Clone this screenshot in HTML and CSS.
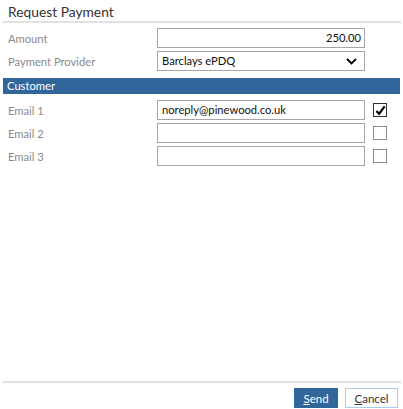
FILE: index.html
```html
<!DOCTYPE html>
<html lang="en">
<head>
  <meta charset="UTF-8" />
  <title>Request Payment</title>
  <link rel="stylesheet" href="styles.css">
</head>
<body>
  <div class="dialog">
    <div class="dialog-title">Request Payment</div>

    <div class="dialog-body">
      <div class="form-row">
        <label class="field-label">Amount</label>
        <div class="field-box amount">250.00</div>
      </div>
      <div class="form-row">
        <label class="field-label">Payment Provider</label>
        <div class="field-box select-box">
          <span>Barclays ePDQ</span>
          <svg class="chevron" width="11" height="7" viewBox="0 0 11 7">
            <path d="M1 1 L5.5 5.5 L10 1" fill="none" stroke="#000" stroke-width="1.8"/>
          </svg>
        </div>
      </div>

      <div class="section-bar">Customer</div>

      <div class="form-row">
        <label class="field-label">Email 1</label>
        <div class="field-box">noreply@pinewood.co.uk</div>
        <span class="check checked">
          <svg width="11" height="11" viewBox="0 0 12 12">
            <path d="M1.5 6.5 L4.5 9.5 L10.5 1.5" fill="none" stroke="#000" stroke-width="2.4"/>
          </svg>
        </span>
      </div>
      <div class="form-row">
        <label class="field-label">Email 2</label>
        <div class="field-box"></div>
        <span class="check"></span>
      </div>
      <div class="form-row">
        <label class="field-label">Email 3</label>
        <div class="field-box"></div>
        <span class="check"></span>
      </div>
    </div>

    <div class="dialog-footer">
      <button class="btn btn-primary"><u>S</u>end</button>
      <button class="btn btn-default"><u>C</u>ancel</button>
    </div>
  </div>
</body>
</html>
```

FILE: styles.css
```css
* {
  box-sizing: border-box;
  margin: 0;
  padding: 0;
}

body {
  font-family: Lato, 'Open Sans', sans-serif;
  font-size: 11.2px;
  color: #222;
  background: #fff;
}

.dialog {
  width: 403px;
  height: 409px;
  display: flex;
  flex-direction: column;
}

.dialog-title {
  margin: 0 2px;
  padding: 3px 6px 4px;
  height: 23px;
  font-size: 13.8px;
  color: #333;
  border-bottom: 2px solid #e1e1e1;
}

.dialog-body {
  flex: 1;
  padding: 5px 3px 0;
  display: flex;
  flex-direction: column;
  gap: 3px;
}

.form-row {
  display: grid;
  grid-template-columns: 149px 208px 22px;
  align-items: center;
  height: 20px;
  padding-left: 5px;
}

.field-label {
  color: #8a8a8a;
}

.field-box {
  height: 20px;
  border: 1px solid #a6a6a6;
  padding: 0 4px;
  line-height: 18px;
  color: #111;
  white-space: nowrap;
}

.field-box.amount {
  text-align: right;
  padding-right: 3px;
}

.select-box {
  display: flex;
  justify-content: space-between;
  align-items: center;
  padding-right: 7px;
}

.section-bar {
  margin: 4px 0 3px;
  height: 16px;
  line-height: 16px;
  padding-left: 4px;
  background: #31669b;
  color: #fff;
}

.check {
  justify-self: end;
  width: 14px;
  height: 14px;
  border: 1px solid #8c8c8c;
  display: flex;
  align-items: center;
  justify-content: center;
}

.check.checked {
  border-color: #333;
}

.dialog-footer {
  margin: 0 2px;
  border-top: 2px solid #e1e1e1;
  padding: 5px 3px 0 0;
  height: 28px;
  display: flex;
  justify-content: flex-end;
  gap: 7px;
}

.btn {
  font-family: inherit;
  font-size: 11.5px;
  height: 20px;
  padding: 0 8px;
  cursor: pointer;
}

.btn-primary {
  width: 44px;
  background: #31669b;
  color: #fff;
  border: 1px solid #31669b;
}

.btn-default {
  width: 53px;
  background: #fff;
  color: #333;
  border: 1px solid #a9cdee;
}
```
